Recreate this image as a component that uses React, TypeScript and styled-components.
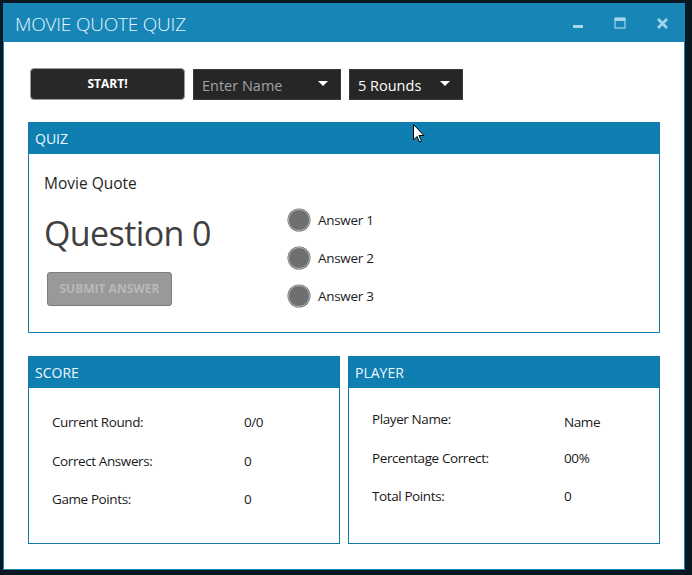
import React from "react";
import styled, { createGlobalStyle } from "styled-components";

const GlobalStyle = createGlobalStyle`
	html, body {
		margin: 0;
		padding: 0;
		background: #071820;
	}
	body {
		font-family: "Open Sans", "Noto Sans", sans-serif;
	}
`;

const Frame = styled.div`
	width: 692px;
	height: 575px;
	box-sizing: border-box;
	padding: 3px 7px 5px 3px;
	position: relative;
`;

const Window = styled.div`
	width: 682px;
	height: 567px;
	box-sizing: border-box;
	border: 1px solid #1786b7;
	background: #ffffff;
	display: flex;
	flex-direction: column;
`;

const TitleBar = styled.div`
	height: 38px;
	background: #1786b7;
	display: flex;
	align-items: center;
	padding: 0 14px 0 11px;
	flex-shrink: 0;
`;

const Title = styled.div`
	flex: 1;
	color: #e6f4fb;
	font-size: 19px;
	font-weight: 300;
	letter-spacing: -0.2px;
	padding-top: 2px;
`;

const Controls = styled.div`
	display: flex;
	align-items: center;
	gap: 26px;
`;

const CtrlButton = styled.div`
	width: 16px;
	height: 16px;
	display: flex;
	align-items: center;
	justify-content: center;
`;

const Content = styled.div`
	flex: 1;
	padding: 26px 24px 0 24px;
	display: flex;
	flex-direction: column;
`;

const Toolbar = styled.div`
	display: flex;
	align-items: flex-start;
	gap: 8px;
	height: 32px;
`;

const StartButton = styled.div`
	width: 155px;
	height: 32px;
	margin-left: 2px;
	box-sizing: border-box;
	background: #282828;
	border: 1px solid #9a9a9a;
	border-radius: 4px;
	color: #ffffff;
	font-size: 12px;
	font-weight: 700;
	display: flex;
	align-items: center;
	justify-content: center;
	padding-bottom: 2px;
`;

const Combo = styled.div<{ $w: number; $muted?: boolean }>`
	width: ${(p) => p.$w}px;
	height: 31px;
	margin-top: 1px;
	box-sizing: border-box;
	background: #262626;
	border: 1px solid #3c3c3c;
	display: flex;
	align-items: center;
	padding: 0 12px 0 8px;
	color: ${(p) => (p.$muted ? "#9ea3a8" : "#ffffff")};
	font-size: 14.5px;
`;

const ComboText = styled.span`
	flex: 1;
	padding-top: 1px;
`;

const Caret = styled.span`
	width: 0;
	height: 0;
	border-left: 5px solid transparent;
	border-right: 5px solid transparent;
	border-top: 5px solid #ffffff;
	margin-top: -2px;
`;

const Group = styled.div<{ $h: number }>`
	height: ${(p) => p.$h}px;
	box-sizing: border-box;
	border: 1px solid #1279ad;
	display: flex;
	flex-direction: column;
`;

const GroupHeader = styled.div`
	height: 31px;
	flex-shrink: 0;
	background: #0f7eb1;
	color: #eef8fc;
	font-size: 14px;
	display: flex;
	align-items: center;
	padding-left: 6px;
`;

const QuizGroup = styled(Group)`
	margin-top: 22px;
`;

const QuizBody = styled.div`
	flex: 1;
	display: flex;
	padding: 18px 0 0 15px;
`;

const QuizLeft = styled.div`
	width: 244px;
	display: flex;
	flex-direction: column;
`;

const MovieQuote = styled.div`
	color: #1f1f1f;
	font-size: 15.5px;
	height: 26px;
`;

const Question = styled.div`
	color: #404040;
	font-size: 34px;
	letter-spacing: -0.6px;
	margin-top: 11px;
	height: 48px;
	line-height: 48px;
`;

const SubmitButton = styled.div`
	width: 125px;
	height: 34px;
	box-sizing: border-box;
	margin: 15px 0 0 3px;
	background: #999999;
	border: 1px solid #7d7d7d;
	border-radius: 3px;
	color: #b8b8b8;
	font-size: 12px;
	font-weight: 700;
	display: flex;
	align-items: center;
	justify-content: center;
	padding-bottom: 2px;
`;

const Answers = styled.div`
	display: flex;
	flex-direction: column;
	gap: 15px;
	margin-top: 37px;
`;

const Answer = styled.div`
	display: flex;
	align-items: center;
	gap: 8px;
	height: 22px;
	color: #1c1c1c;
	font-size: 13.5px;
	letter-spacing: -0.3px;
	padding-bottom: 1px;
`;

const Radio = styled.span`
	width: 22px;
	height: 22px;
	box-sizing: border-box;
	border-radius: 50%;
	background: #6f6f6f;
	border: 1.5px solid #b4b4b4;
	box-shadow: 0 0 0 0.5px #6a6a6a;
`;

const Bottom = styled.div`
	display: flex;
	gap: 8px;
	margin-top: 23px;
`;

const Half = styled(Group)`
	width: 312px;
`;

const Rows = styled.div<{ $top: number }>`
	display: grid;
	grid-template-columns: 192px auto;
	row-gap: 16.5px;
	padding: ${(p) => p.$top}px 0 0 23px;
`;

const Cell = styled.div<{ $shift?: number }>`
	height: 22px;
	line-height: 22px;
	color: #1a1a1a;
	font-size: 13.5px;
	letter-spacing: -0.4px;
	transform: translateY(${(p) => p.$shift ?? 0}px);
`;

const Cursor = styled.svg`
	position: absolute;
	left: 413px;
	top: 124px;
`;

const scoreRows = [
	["Current Round:", "0/0"],
	["Correct Answers:", "0"],
	["Game Points:", "0"],
];

const playerRows = [
	["Player Name:", "Name"],
	["Percentage Correct:", "00%"],
	["Total Points:", "0"],
];

export default function App() {
	return (
		<Frame>
			<GlobalStyle />
			<Window>
				<TitleBar>
					<Title>MOVIE QUOTE QUIZ</Title>
					<Controls>
						<CtrlButton>
							<svg width="12" height="12" viewBox="0 0 12 12">
								<rect x="1" y="8" width="10" height="3" fill="#a6d6ec" />
							</svg>
						</CtrlButton>
						<CtrlButton>
							<svg width="12" height="12" viewBox="0 0 12 12">
								<rect x="1" y="1" width="10" height="10" fill="none" stroke="#a6d6ec" strokeWidth="1.2" />
								<rect x="1" y="1" width="10" height="3" fill="#a6d6ec" />
							</svg>
						</CtrlButton>
						<CtrlButton>
							<svg width="13" height="13" viewBox="0 0 13 13">
								<path d="M2 2 L11 11 M11 2 L2 11" stroke="#a6d6ec" strokeWidth="2.6" />
							</svg>
						</CtrlButton>
					</Controls>
				</TitleBar>
				<Content>
					<Toolbar>
						<StartButton>START!</StartButton>
						<Combo $w={148} $muted>
							<ComboText>Enter Name</ComboText>
							<Caret />
						</Combo>
						<Combo $w={114}>
							<ComboText>5 Rounds</ComboText>
							<Caret />
						</Combo>
					</Toolbar>

					<QuizGroup $h={211}>
						<GroupHeader>QUIZ</GroupHeader>
						<QuizBody>
							<QuizLeft>
								<MovieQuote>Movie Quote</MovieQuote>
								<Question>Question 0</Question>
								<SubmitButton>SUBMIT ANSWER</SubmitButton>
							</QuizLeft>
							<Answers>
								{["Answer 1", "Answer 2", "Answer 3"].map((a) => (
									<Answer key={a}>
										<Radio />
										{a}
									</Answer>
								))}
							</Answers>
						</QuizBody>
					</QuizGroup>

					<Bottom>
						<Half $h={188}>
							<GroupHeader>SCORE</GroupHeader>
							<Rows $top={23}>
								{scoreRows.map(([l, v]) => (
									<React.Fragment key={l}>
										<Cell>{l}</Cell>
										<Cell>{v}</Cell>
									</React.Fragment>
								))}
							</Rows>
						</Half>
						<Half $h={188}>
							<GroupHeader>PLAYER</GroupHeader>
							<Rows $top={20}>
								{playerRows.map(([l, v], i) => (
									<React.Fragment key={l}>
										<Cell>{l}</Cell>
										<Cell $shift={i === 0 ? 3 : 0}>{v}</Cell>
									</React.Fragment>
								))}
							</Rows>
						</Half>
					</Bottom>
				</Content>
			</Window>
			<Cursor width="12" height="19" viewBox="0 0 12 19">
				<path d="M0.5 0.5 L0.5 16 L4 12.5 L6.5 18 L8.5 17 L6 11.5 L11 11.5 Z" fill="#ffffff" stroke="#000000" strokeWidth="1" />
			</Cursor>
		</Frame>
	);
}
